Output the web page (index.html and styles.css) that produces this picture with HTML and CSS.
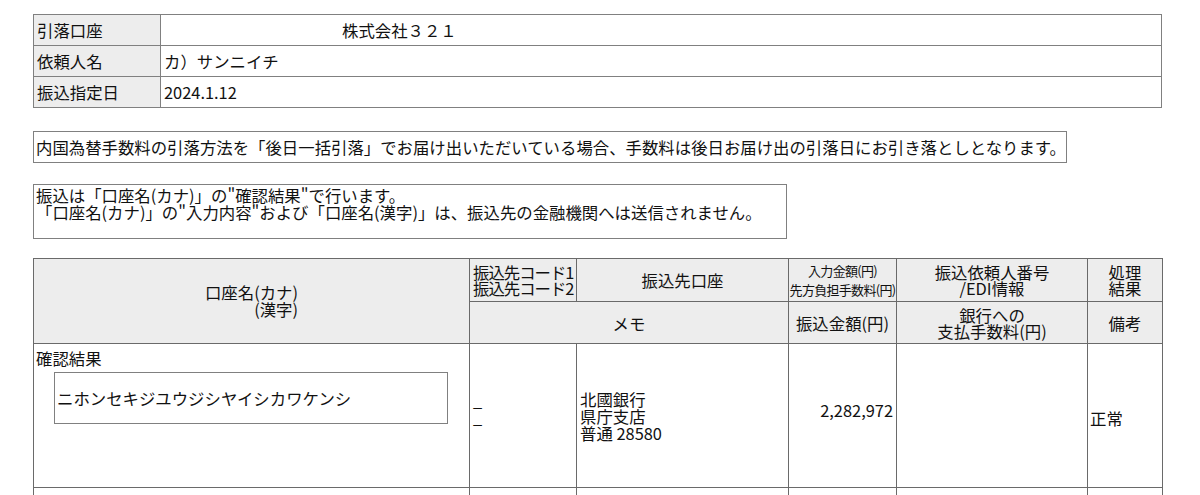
FILE: index.html
```html
<!DOCTYPE html>
<html lang="ja">
<head>
<meta charset="utf-8">
<title>振込確認</title>
<link rel="stylesheet" href="styles.css">
</head>
<body>
<table class="info">
  <tr><th>引落口座</th><td class="corp">株式会社３２１</td></tr>
  <tr><th>依頼人名</th><td>カ）サンニイチ</td></tr>
  <tr><th>振込指定日</th><td>2024.1.12</td></tr>
</table>

<div class="notice one">内国為替手数料の引落方法を「後日一括引落」でお届け出いただいている場合、手数料は後日お届け出の引落日にお引き落としとなります。</div>

<div class="notice two">振込は「口座名(カナ)」の"確認結果"で行います。<br>「口座名(カナ)」の"入力内容"および「口座名(漢字)」は、振込先の金融機関へは送信されません。</div>

<table class="list">
  <colgroup>
    <col class="c1"><col class="c2"><col class="c3"><col class="c4"><col class="c5"><col class="c6">
  </colgroup>
  <thead>
    <tr class="h1">
      <th rowspan="2" class="name-h"><span class="stack">口座名(カナ)<br>(漢字)</span></th>
      <th class="code-h">振込先コード1<br>振込先コード2</th>
      <th>振込先口座</th>
      <th class="small">入力金額(円)<br>先方負担手数料(円)</th>
      <th>振込依頼人番号<br>/EDI情報</th>
      <th>処理<br>結果</th>
    </tr>
    <tr class="h2">
      <th colspan="2">メモ</th>
      <th>振込金額(円)</th>
      <th>銀行への<br>支払手数料(円)</th>
      <th>備考</th>
    </tr>
  </thead>
  <tbody>
    <tr class="row">
      <td class="name-cell"><div class="lbl">確認結果</div><div class="kana-box">ニホンセキジユウジシヤイシカワケンシ</div></td>
      <td class="codes">_<br>_</td>
      <td class="bank">北國銀行<br>県庁支店<br>普通 28580</td>
      <td class="amount">2,282,972</td>
      <td></td>
      <td class="result">正常</td>
    </tr>
    <tr class="row">
      <td class="name-cell"><div class="lbl">入力内容</div><div class="kana-box">ニホンセキジユウジシヤイシカワケンシ</div></td>
      <td class="codes"></td>
      <td class="bank"></td>
      <td class="amount"></td>
      <td></td>
      <td class="result"></td>
    </tr>
  </tbody>
</table>
</body>
</html>
```
FILE: styles.css
```css
html, body {
  overflow: hidden;
}
body {
  margin: 0;
  padding: 14px 0 0 33px;
  background: #ffffff;
  color: #111;
  font-family: "Noto Sans CJK JP", "Noto Sans", sans-serif;
  font-size: 16.4px;
  line-height: 17px;
}

/* top info table */
.info {
  width: 1129px;
  border-collapse: collapse;
  border: 1px solid #808080;
}
.info th,
.info td {
  border: 1px solid #808080;
  height: 30px;
  padding: 0 3px;
  font-weight: normal;
  text-align: left;
  vertical-align: middle;
}
.info th {
  width: 120px;
  background: #ededed;
}
.info .corp {
  padding-left: 181px;
}

/* notices */
.notice {
  width: fit-content;
  border: 1px solid #808080;
}
.notice.one {
  margin-top: 23px;
  padding: 0 0 0 2px;
  line-height: 30px;
}
.notice.two {
  margin-top: 21px;
  padding: 2px 24px 17px 2px;
  line-height: 17px;
}

/* list table */
.list {
  margin-top: 19px;
  width: 1129px;
  table-layout: fixed;
  border-collapse: collapse;
}
.list .c1 { width: 436px; }
.list .c2 { width: 107px; }
.list .c3 { width: 212px; }
.list .c4 { width: 108px; }
.list .c5 { width: 191px; }
.list .c6 { width: 75px; }

.list th,
.list td {
  border: 1px solid #6a6a6a;
  padding: 0 2px;
}
.list th {
  background: #ededed;
  font-weight: normal;
  text-align: center;
  vertical-align: middle;
  line-height: 16px;
  white-space: nowrap;
}
.list .h1 th { height: 42px; }
.list .h2 th { height: 41px; }
.list th.code-h {
  text-align: left;
  letter-spacing: -1px;
  padding: 0 0 0 3px;
}
.list th.small {
  font-size: 13px;
  line-height: 19px;
  letter-spacing: -0.7px;
  padding: 0;
}
.stack {
  display: inline-block;
  text-align: right;
  line-height: 17px;
}

.list .row {
  height: 144px;
}
.list td {
  vertical-align: middle;
  line-height: 17px;
}
.list td.name-cell {
  vertical-align: top;
  padding: 2px 2px;
}
.lbl {
  line-height: 24px;
}
.kana-box {
  margin: 2px 0 0 18px;
  width: 394px;
  height: 52px;
  box-sizing: border-box;
  border: 1px solid #808080;
  padding: 0 2px;
  display: flex;
  align-items: center;
}
.list td.codes {
  padding: 0 3px 13px;
}
.list td.bank {
  padding: 2px 3px 0;
}
.list td.amount {
  text-align: right;
  padding: 0 3px 10px 2px;
}
.list td.result {
  padding: 6px 2px 0;
}
```
